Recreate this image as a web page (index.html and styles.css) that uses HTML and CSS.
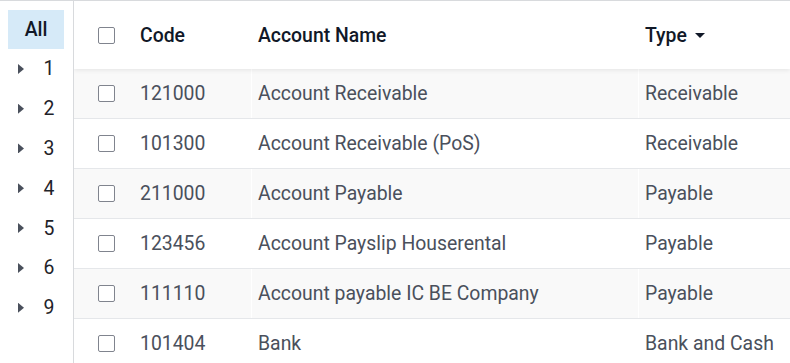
FILE: index.html
```html
<!DOCTYPE html>
<html lang="en">
<head>
<meta charset="utf-8">
<title>Accounts</title>
<link rel="stylesheet" href="styles.css">
</head>
<body>
<div class="page">
  <aside class="sidebar">
    <div class="all">All</div>
    <ul class="tree">
      <li><span class="caret"></span><span class="num">1</span></li>
      <li><span class="caret"></span><span class="num">2</span></li>
      <li><span class="caret"></span><span class="num">3</span></li>
      <li><span class="caret"></span><span class="num">4</span></li>
      <li><span class="caret"></span><span class="num">5</span></li>
      <li><span class="caret"></span><span class="num">6</span></li>
      <li><span class="caret"></span><span class="num">9</span></li>
    </ul>
  </aside>
  <main class="list">
    <div class="row head">
      <div class="cell sel"><span class="check"></span></div>
      <div class="cell code">Code</div>
      <div class="cell name">Account Name</div>
      <div class="cell type">Type <span class="sort"></span></div>
    </div>
    <div class="row odd">
      <div class="cell sel"><span class="check"></span></div>
      <div class="cell code">121000</div>
      <div class="cell name">Account Receivable</div>
      <div class="cell type">Receivable</div>
    </div>
    <div class="row">
      <div class="cell sel"><span class="check"></span></div>
      <div class="cell code">101300</div>
      <div class="cell name">Account Receivable (PoS)</div>
      <div class="cell type">Receivable</div>
    </div>
    <div class="row odd">
      <div class="cell sel"><span class="check"></span></div>
      <div class="cell code">211000</div>
      <div class="cell name">Account Payable</div>
      <div class="cell type">Payable</div>
    </div>
    <div class="row">
      <div class="cell sel"><span class="check"></span></div>
      <div class="cell code">123456</div>
      <div class="cell name">Account Payslip Houserental</div>
      <div class="cell type">Payable</div>
    </div>
    <div class="row odd">
      <div class="cell sel"><span class="check"></span></div>
      <div class="cell code">111110</div>
      <div class="cell name">Account payable IC BE Company</div>
      <div class="cell type">Payable</div>
    </div>
    <div class="row">
      <div class="cell sel"><span class="check"></span></div>
      <div class="cell code">101404</div>
      <div class="cell name">Bank</div>
      <div class="cell type">Bank and Cash</div>
    </div>
  </main>
</div>
</body>
</html>
```

FILE: styles.css
```css
html, body {
  margin: 0;
  padding: 0;
  background: #ffffff;
}
body {
  font-family: Roboto, "Liberation Sans", Arial, sans-serif;
  font-size: 19.4px;
  color: #4a505c;
  width: 790px;
  height: 363px;
  overflow: hidden;
}
.page {
  display: flex;
  border-top: 1px solid #d8dadd;
  height: 362px;
}
.sidebar {
  width: 73px;
  flex: none;
  border-right: 1px solid #d8dadd;
  padding-top: 9px;
}
.all {
  margin-left: 8px;
  width: 56px;
  height: 39px;
  background: #d6eaf8;
  color: #111827;
  font-weight: 500;
  display: flex;
  align-items: center;
  justify-content: center;
}
.tree {
  list-style: none;
  margin: 0;
  padding: 0;
}
.tree li {
  height: 39.8px;
  display: flex;
  align-items: center;
  color: #1f2329;
}
.caret {
  display: block;
  flex: none;
  margin-left: 18px;
  width: 6px;
  height: 10px;
  background: #4a505c;
  clip-path: polygon(0 0, 100% 50%, 0 100%);
}
.num {
  width: 20px;
  margin-left: 15px;
  text-align: center;
}
.list {
  flex: 1;
  display: flex;
  flex-direction: column;
  overflow: hidden;
}
.row {
  flex: none;
  display: grid;
  grid-template-columns: 58px 119px 387px 1fr;
  height: 50px;
  box-sizing: border-box;
  border-bottom: 1px solid #e5e7ea;
}
.row.odd {
  background: #f9f9f9;
}
.row.head {
  height: 68px;
  border-bottom: none;
  color: #111827;
  font-weight: 500;
  position: relative;
  z-index: 1;
  background: #ffffff;
  box-shadow: 0 1px 5px rgba(0, 0, 0, 0.09);
}
.cell {
  display: flex;
  align-items: center;
  white-space: nowrap;
}
.sel {
  padding-left: 24px;
}
.code {
  padding-left: 8px;
}
.name {
  border-left: 1px solid #ffffff;
  padding-left: 6px;
}
.type {
  border-left: 1px solid #ffffff;
  padding-left: 6px;
}
.head .name, .head .type {
  border-left-color: transparent;
}
.check {
  width: 17px;
  height: 17px;
  box-sizing: border-box;
  border: 1px solid #80848e;
  border-radius: 2px;
  background: #ffffff;
}
.sort {
  display: inline-block;
  margin-left: 8px;
  width: 0;
  height: 0;
  border-left: 5px solid transparent;
  border-right: 5px solid transparent;
  border-top: 5px solid #111827;
}
```
